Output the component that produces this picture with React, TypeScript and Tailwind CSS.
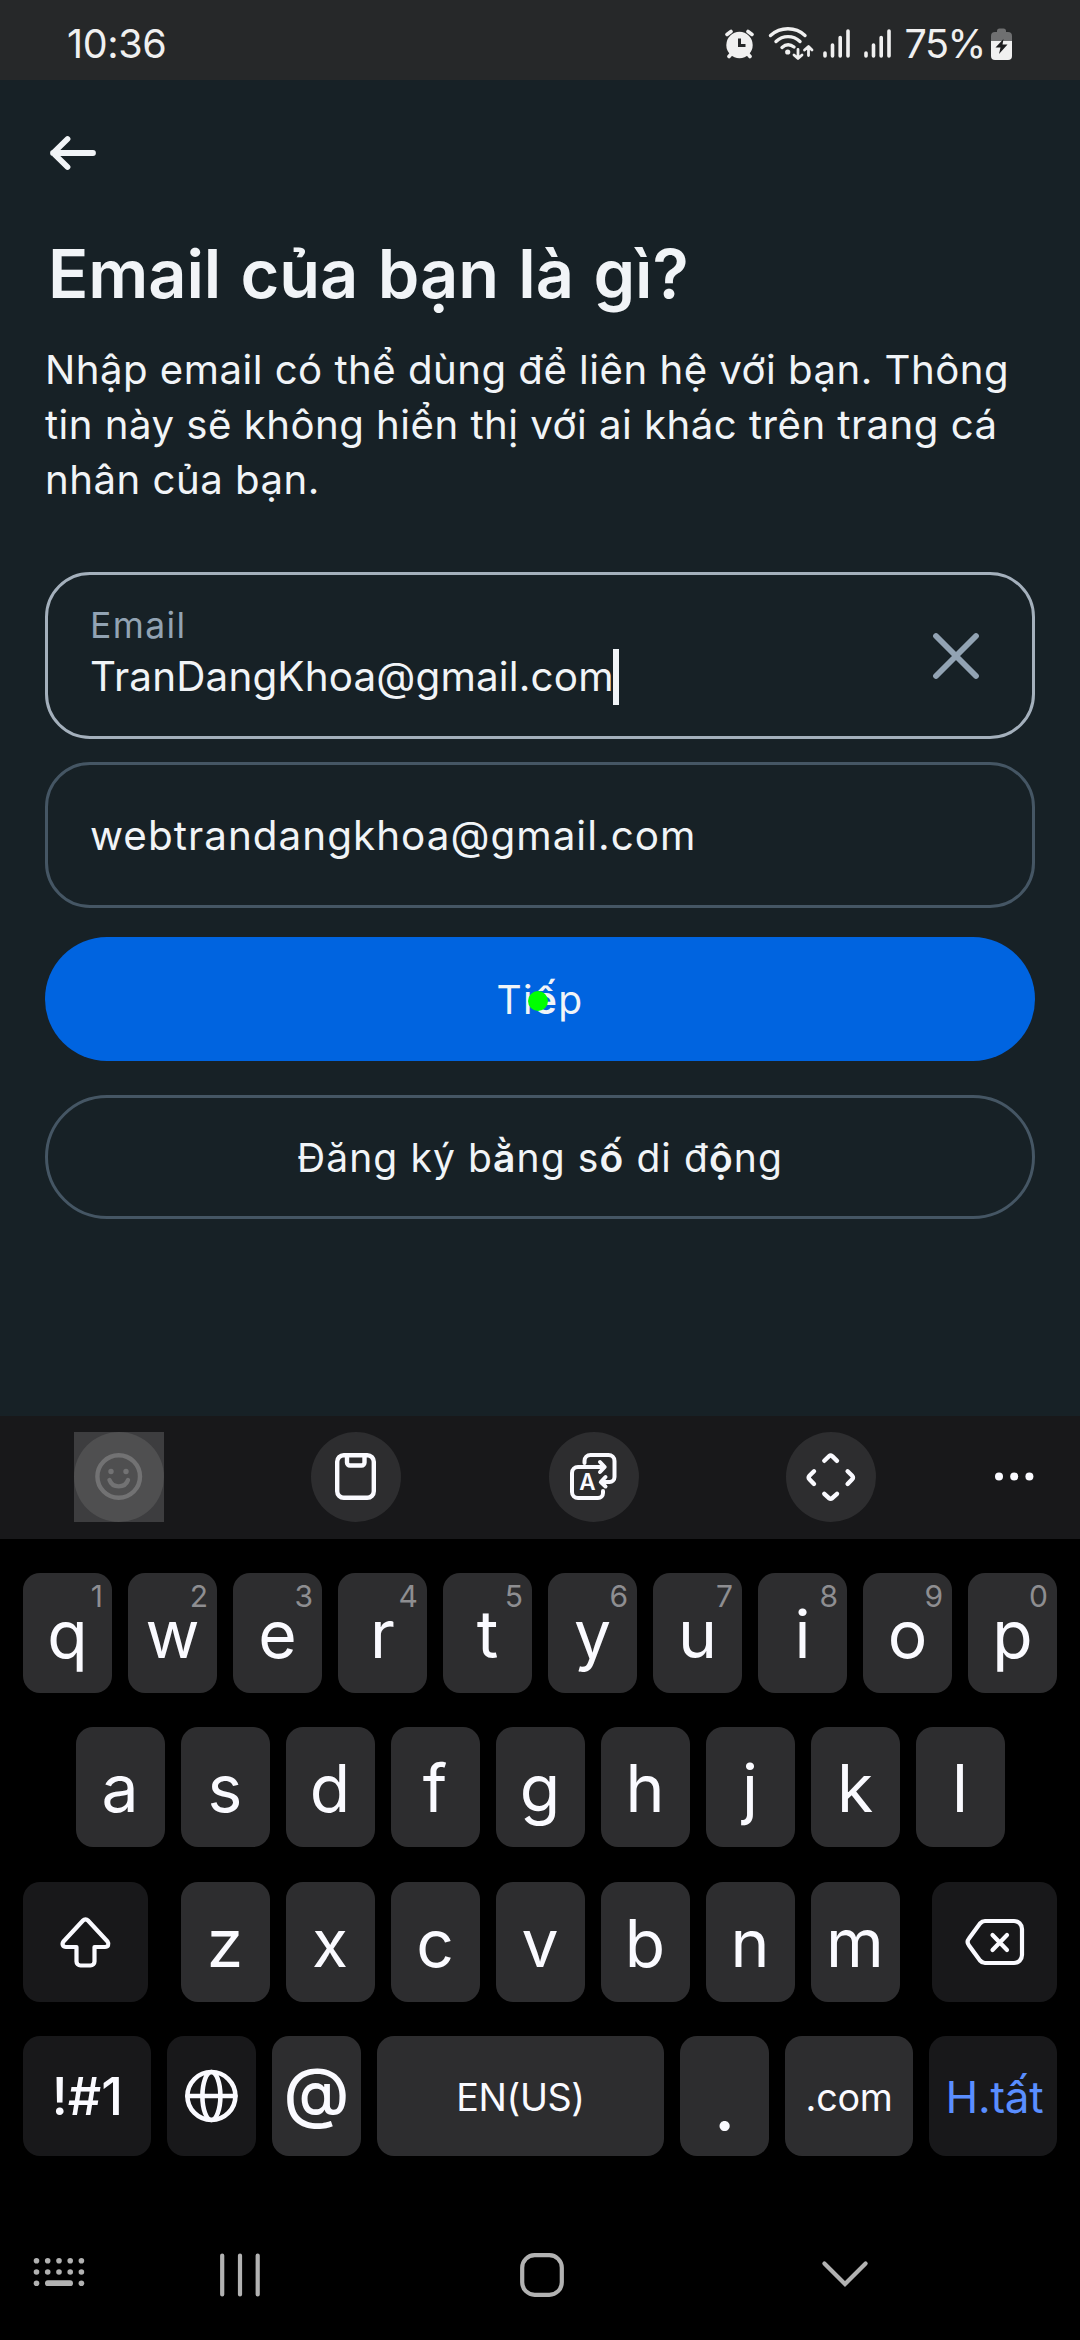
import type { ReactNode } from "react";

const stroke = {
  fill: "none",
  stroke: "currentColor",
  strokeLinecap: "round" as const,
  strokeLinejoin: "round" as const,
};

function StatusBar() {
  return (
    <header className="flex h-[80px] items-center justify-between bg-[#262829] pr-[67px] pl-[67px] text-[#f0f0f0]">
      <span className="pt-[9px] text-[39.5px] leading-[71px] tracking-[-0.4px]">10:36</span>
      <div className="flex items-center">
        <svg className="h-[80px] w-[30px]" viewBox="725 0 30 80" fill="currentColor">
          <circle cx="739.5" cy="45" r="13.2" />
          <g {...stroke} strokeWidth="3.6">
            <path d="M727 34.5 L731 31.5 M752 34.5 L748 31.5 M729 56.5 L732 53 M750 56.5 L747 53" />
          </g>
          <path d="M739.5 38.5 V45.5 H745.5" fill="none" stroke="#262829" strokeWidth="3" />
        </svg>
        <svg className="ml-[13px] h-[80px] w-[46px]" viewBox="768 0 46 80" {...stroke} strokeWidth="3.4">
          <path d="M770.5 35.5 C780.5 26.5 795.5 26.5 805 35.5" />
          <path d="M776 41.5 C783 35 793 35 800 41.5" />
          <path d="M782 47.5 C786 44 790 44 794 47" />
          <circle cx="787.7" cy="52" r="2.6" fill="currentColor" stroke="none" />
          <path d="M798 49.5 V58 M794 55 L798 58.5 L802 55 M808.5 55.5 V47 M804.5 50 L808.5 46.5 L812 50" strokeWidth="2.8" />
        </svg>
        <svg className="ml-[9px] h-[80px] w-[70px]" viewBox="823 0 70 80" {...stroke} strokeWidth="3.6">
          <path d="M825 53 V56 M832.5 45 V56 M840.2 37.5 V56 M848 31 V56 M866 53 V56 M873.5 45 V56 M881.2 37.5 V56 M889 31 V56" />
        </svg>
        <span className="mt-[9px] ml-[11px] text-[39.5px] leading-[71px] tracking-[-1.4px]">75%</span>
        <svg className="ml-[6px] h-[80px] w-[22px]" viewBox="992 0 22 80">
          <path d="M998 32 v-1 a2.5 2.5 0 0 1 2.5-2.5 h4 a2.5 2.5 0 0 1 2.5 2.5 v1 h2 a4 4 0 0 1 4 4 v5 h-21 v-5 a4 4 0 0 1 4-4z" fill="#6f7071" />
          <path d="M992 41 h21 v15 a4 4 0 0 1-4 4 h-13 a4 4 0 0 1-4-4z" fill="#f0f0f0" />
          <path d="M1004.5 39 L996.5 47.5 H1001.5 L1000 54 L1008.5 44.5 H1003.5z" fill="#1c1c1e" />
        </svg>
      </div>
    </header>
  );
}

function FormPage() {
  return (
    <main className="flex h-[1336px] flex-col bg-[#172126] px-[45px] text-[#f1f4f7]">
      <button className="mt-[48px] ml-[3px] flex h-[50px] w-[50px] items-center">
        <svg className="h-[50px] w-[50px]" viewBox="48 128 50 50" {...stroke} strokeWidth="5.8">
          <path d="M93 153 H53 M67.5 139 L53.2 153 L67.5 167" />
        </svg>
      </button>
      <h1 className="mt-[56px] ml-[3px] text-[66.7px] leading-[80px] font-semibold tracking-[-0.1px] [word-spacing:2.8px]">
        Email của bạn là gì?
      </h1>
      <p className="mt-[28px] text-[40.2px] leading-[55px] tracking-[0.47px] whitespace-nowrap">
        Nhập email có thể dùng để liên hệ với bạn. Thông
        <br />
        tin này sẽ không hiển thị với ai khác trên trang cá
        <br />
        nhân của bạn.
      </p>
      <section className="mt-[65px] flex h-[167px] justify-between rounded-[45px] border-[3px] border-[#a4b0bc] pr-[50px] pl-[43px]">
        <div className="pt-[27px]">
          <div className="-ml-px text-[35.5px] leading-[47px] tracking-[1.4px] text-[#92a3b3]">Email</div>
          <div className="-ml-px flex items-center text-[40.4px] leading-[54px] tracking-[0.17px]">
            <span>TranDangKhoa@gmail.com</span>
            <span className="-ml-px h-[56px] w-[6px] bg-[#f1f4f7]" />
          </div>
        </div>
        <svg className="h-[161px] w-[52px]" viewBox="930 575 52 161" {...stroke} stroke="#92a3b3" strokeWidth="5.8">
          <path d="M936 636 L976 676 M976 636 L936 676" />
        </svg>
      </section>
      <section className="mt-[23px] flex h-[146px] items-center rounded-[45px] border-[3px] border-[#455664] pt-[2px] pl-[42px] text-[40.4px] tracking-[1.03px]">
        webtrandangkhoa@gmail.com
      </section>
      <button className="relative mt-[29px] flex h-[124px] items-center justify-center rounded-full bg-[#0064e0] pt-[2px] text-[39px] tracking-[1.3px]">
        <span>
          Ti<span className="font-semibold">ế</span>p
        </span>
        <span className="absolute top-[54px] left-[483px] size-[20px] rounded-full bg-[#00ff00]" />
      </button>
      <button className="mt-[34px] flex h-[124px] items-center justify-center rounded-full border-[3px] border-[#455664] pt-[2px] text-[39px] tracking-[1.1px]">
        <span>
          Đăng ký b<span className="font-semibold">ằ</span>ng s<span className="font-semibold">ố</span> di đ
          <span className="font-semibold">ộ</span>ng
        </span>
      </button>
    </main>
  );
}

function Tool({ box, className, children }: { box: string; className: string; children: ReactNode }) {
  return (
    <div className={className}>
      <svg className="size-[90px]" viewBox={box} {...stroke} strokeWidth="4.4">
        {children}
      </svg>
    </div>
  );
}

function Toolbar() {
  return (
    <div className="flex h-[123px] items-start bg-[#18181a] pt-[16px] pl-[74px] text-[#fafaff]">
      <div className="bg-[#3d3d3f]">
        <Tool box="74 1432 90 90" className="rounded-full bg-[#4f4f50] text-[#727273]">
          <circle cx="118.7" cy="1476.5" r="21.3" />
          <path d="M109.5 1480 C112.5 1488.5 125 1488.5 128 1480" />
          <g fill="currentColor" stroke="none">
            <circle cx="111" cy="1471.5" r="2.7" />
            <circle cx="126" cy="1471.5" r="2.7" />
          </g>
        </Tool>
      </div>
      <Tool box="311 1432 90 90" className="ml-[147px] rounded-full bg-[#2d2d2f]">
        <rect x="337.2" y="1455.2" width="36.6" height="42.6" rx="6.5" />
        <path d="M347 1456 V1462.5 A3 3 0 0 0 350 1465.5 H361.5 A3 3 0 0 0 364.5 1462.5 V1456" />
      </Tool>
      <Tool box="549 1432 90 90" className="ml-[148px] rounded-full bg-[#2d2d2f]">
        <g strokeWidth="4">
          <path d="M584.5 1463 v-2 a6 6 0 0 1 6-6 h18 a6 6 0 0 1 6 6 v16 a5 5 0 0 1-5 5 h-8.5 M605.5 1477 L600.8 1482 L605.5 1486.5" />
          <path d="M603 1491 v2 a5 5 0 0 1-5 5 h-20 a6 6 0 0 1-6-6 v-19 a6 6 0 0 1 6-6 h25.5 M600 1462 L604.7 1467 L600 1472" />
        </g>
        <text x="587.5" y="1490" textAnchor="middle" className="text-[22.5px] font-semibold" fill="currentColor" stroke="none">
          A
        </text>
      </Tool>
      <Tool box="786 1432 90 90" className="ml-[147px] rounded-full bg-[#2d2d2f]">
        <path d="M824.3 1460.8 L829 1456.2 Q830.6 1455 832.2 1456.2 L837 1460.8" />
        <path d="M824.3 1493.8 L829 1498.2 Q830.6 1499.4 832.2 1498.2 L837 1493.8" />
        <path d="M814 1471.3 L809.4 1475.8 Q808 1477.5 809.4 1479.2 L814 1484" />
        <path d="M847.6 1471.3 L852.2 1475.8 Q853.6 1477.5 852.2 1479.2 L847.6 1484" />
      </Tool>
      <svg className="ml-[118px] h-[90px] w-[40px]" viewBox="994 1432 40 90" fill="currentColor">
        <circle cx="999" cy="1476.6" r="4" />
        <circle cx="1014.2" cy="1476.6" r="4" />
        <circle cx="1029.4" cy="1476.6" r="4" />
      </svg>
    </div>
  );
}

function LetterKey({ label, hint }: { label: string; hint?: string }) {
  return (
    <div className="relative flex h-[120px] w-[89px] justify-center rounded-[17px] bg-[#2d2d2f] pt-[1px] text-[66px] leading-[120px]">
      {label}
      {hint && <span className="absolute top-[8px] right-[9px] text-[30px] leading-[30px] text-[#8e8e91]">{hint}</span>}
    </div>
  );
}

function Keyboard() {
  return (
    <div className="flex h-[801px] flex-col bg-black text-[#fafaff]">
      <div className="mt-[34px] flex justify-between px-[23px]">
        {[..."qwertyuiop"].map((c, i) => (
          <LetterKey key={c} label={c} hint={String((i + 1) % 10)} />
        ))}
      </div>
      <div className="mt-[34px] flex justify-between px-[75.5px]">
        {[..."asdfghjkl"].map((c) => (
          <LetterKey key={c} label={c} />
        ))}
      </div>
      <div className="mt-[35px] flex justify-between px-[23px]">
        <div className="h-[120px] w-[125px] rounded-[17px] bg-[#18181a]">
          <svg className="h-[120px] w-[125px]" viewBox="23 1882 125 120" {...stroke} strokeWidth="4.2">
            <path d="M88 1920.5 L107.5 1941.5 c2 3 .5 5.5-2.5 5.5 h-10.5 v14.5 a4 4 0 0 1-4 4 h-10 a4 4 0 0 1-4-4 v-14.5 h-10.5 c-3 0-4.5-2.5-2.5-5.5 L83 1920.5 a3.5 3.5 0 0 1 5 0z" />
          </svg>
        </div>
        <div className="flex gap-[16px]">
          {[..."zxcvbnm"].map((c) => (
            <LetterKey key={c} label={c} />
          ))}
        </div>
        <div className="h-[120px] w-[125px] rounded-[17px] bg-[#18181a]">
          <svg className="h-[120px] w-[125px]" viewBox="932 1882 125 120" {...stroke} strokeWidth="4.2">
            <path d="M985 1921 H1014 a8 8 0 0 1 8 8 v26 a8 8 0 0 1-8 8 H985 c-2 0-3.5-.8-5-2.5 L969 1945.5 c-2-2.5-2-4.5 0-7 L980 1923.5 c1.5-1.7 3-2.5 5-2.5z" />
            <path d="M992.5 1935 L1007 1950 M1007 1935 L992.5 1950" />
          </svg>
        </div>
      </div>
      <div className="mt-[34px] flex gap-[16px] px-[23px] text-center leading-[120px]">
        <div className="h-[120px] w-[128px] rounded-[17px] bg-[#18181a] pl-px text-[52.5px] font-medium">!#1</div>
        <div className="h-[120px] w-[89px] rounded-[17px] bg-[#18181a]">
          <svg className="h-[120px] w-[89px]" viewBox="167 2036 89 120" {...stroke} strokeWidth="4.6">
            <circle cx="211.4" cy="2096" r="24" />
            <ellipse cx="211.4" cy="2096" rx="9" ry="24" />
            <path d="M187.4 2096 H235.4" />
          </svg>
        </div>
        <div className="h-[120px] w-[89px] rounded-[17px] bg-[#2d2d2f] text-[67px] leading-[112px] font-medium">@</div>
        <div className="h-[120px] w-[287px] rounded-[17px] bg-[#2d2d2f] pt-px text-[37.7px] tracking-[-0.4px]">EN(US)</div>
        <div className="h-[120px] w-[89px] rounded-[17px] bg-[#2d2d2f] pt-[9px] text-[70px] font-medium">.</div>
        <div className="h-[120px] w-[128px] rounded-[17px] bg-[#2d2d2f] pt-px text-[37.7px] tracking-[-0.3px]">.com</div>
        <div className="h-[120px] w-[128px] rounded-[17px] bg-[#18181a] pt-px pl-[3px] text-[44px] tracking-[-0.25px] text-[#5a8eff]">H.tất</div>
      </div>
      <nav className="mt-[59px] flex h-[120px] items-center pl-[33px] text-[#b2b2b2]">
        <svg className="h-[50px] w-[52px]" viewBox="33 2250 52 50" fill="currentColor">
          {[36.5, 47.7, 59, 70.2, 81.4].map((x) => (
            <g key={x}>
              <circle cx={x} cy="2260.7" r="2.8" />
              <circle cx={x} cy="2272" r="2.8" />
            </g>
          ))}
          <circle cx="36.5" cy="2283.2" r="2.8" />
          <circle cx="81.4" cy="2283.2" r="2.8" />
          <rect x="45" y="2280.3" width="28" height="5.8" rx="2.9" />
        </svg>
        <svg className="ml-[133px] h-[50px] w-[44px]" viewBox="218 2250 44 50" {...stroke} strokeWidth="4.2">
          <path d="M222.2 2255.5 V2294.5 M240 2255.5 V2294.5 M257.7 2255.5 V2294.5" />
        </svg>
        <svg className="ml-[255px] h-[50px] w-[50px]" viewBox="517 2250 50 50" {...stroke} strokeWidth="4.2">
          <rect x="522.2" y="2255.2" width="39.6" height="39.6" rx="12.5" />
        </svg>
        <svg className="ml-[253px] h-[50px] w-[50px]" viewBox="820 2250 50 50" {...stroke} strokeLinejoin="miter" strokeWidth="4.2">
          <path d="M824.4 2263.6 L845 2284 L865.6 2263.6" />
        </svg>
      </nav>
    </div>
  );
}

export default function App() {
  return (
    <div className="h-[2340px] w-[1080px] overflow-hidden bg-black font-[Inter,'Noto_Sans',sans-serif]">
      <StatusBar />
      <FormPage />
      <Toolbar />
      <Keyboard />
    </div>
  );
}
